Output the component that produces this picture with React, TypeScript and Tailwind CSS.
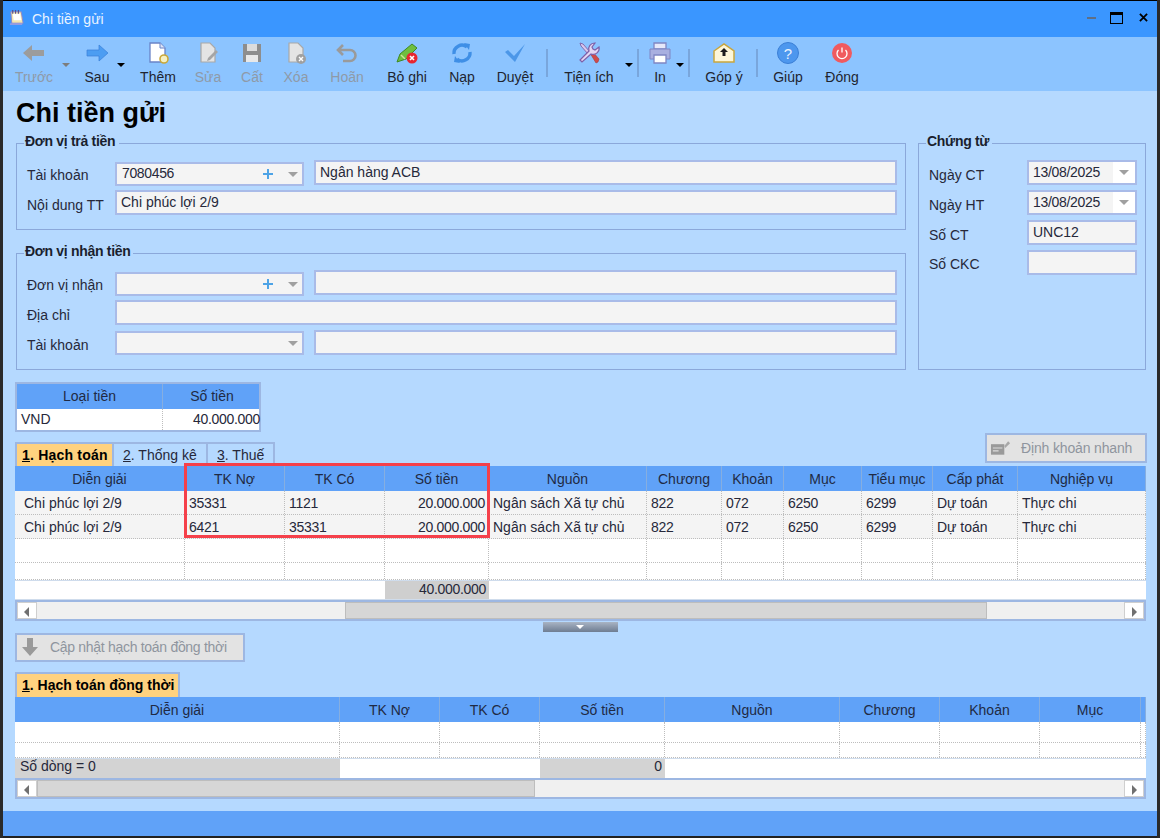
import type { ReactNode } from "react";

const Caret = ({ className = "" }: { className?: string }) => (
  <div className={"absolute w-0 h-0 border-l-[4px] border-r-[4px] border-t-[4px] border-l-transparent border-r-transparent " + className} />
);

const Tool = ({ pos, label, off, icon }: { pos: string; label: string; off?: boolean; icon: ReactNode }) => (
  <div className={"absolute top-[37px] h-[54px] w-[70px] -translate-x-1/2 " + pos}>
    <svg viewBox="0 0 24 24" className="absolute left-[23px] top-[4px] w-[24px] h-[24px]">{icon}</svg>
    <div className={"absolute inset-x-0 top-[31px] text-center text-[14px] leading-[18px] " + (off ? "text-[#8f9aa8]" : "text-[#1f2430]")}>{label}</div>
  </div>
);

const Sep = ({ pos }: { pos: string }) => <div className={"absolute top-[49px] w-[2px] h-[28px] bg-[#79a6dc] " + pos} />;

const Label = ({ pos, children }: { pos: string; children: ReactNode }) => (
  <div className={"absolute text-[14px] leading-[18px] text-[#26283a] " + pos}>{children}</div>
);

const Input = ({ pos, children, white }: { pos: string; children?: ReactNode; white?: boolean }) => (
  <div className={"absolute border-2 border-[#a9bbe8] px-[4px] text-[14px] leading-[20px] text-[#26283a] " + (white ? "bg-white " : "bg-[#f4f4f4] ") + pos}>{children}</div>
);

const Combo = ({ pos, text, plus }: { pos: string; text?: string; plus?: boolean }) => (
  <div className={"absolute h-[24px] w-[189px] border-2 border-[#a9bbe8] bg-[#f4f4f4] text-[14px] leading-[19px] tracking-[-0.35px] text-[#26283a] " + pos}>
    <span className="absolute left-[5px] top-0">{text}</span>
    {plus && <span className="absolute left-[146px] top-[9px] w-[10px] h-[2px] bg-[#4da3e6]" />}
    {plus && <span className="absolute left-[150px] top-[5px] w-[2px] h-[10px] bg-[#4da3e6]" />}
    <Caret className="left-[171px] top-[8px] border-t-[#a0a0a0] border-l-[5px] border-r-[5px] border-t-[5px]" />
  </div>
);

const DateBox = ({ pos, text }: { pos: string; text: string }) => (
  <div className={"absolute left-[1027px] h-[25px] w-[110px] border-2 border-[#a9bbe8] bg-[#f4f4f4] text-[14px] leading-[20px] tracking-[-0.3px] text-[#26283a] " + pos}>
    <span className="absolute left-[4px] top-0">{text}</span>
    <div className="absolute right-0 top-0 bottom-0 w-[22px] bg-white" />
    <Caret className="right-[6px] top-[8px] border-t-[#a0a0a0] border-l-[5px] border-r-[5px] border-t-[5px]" />
  </div>
);

const Group = ({ pos, title, titleW }: { pos: string; title: string; titleW: string }) => (
  <div className={"absolute border border-[#8ba8da] " + pos}>
    <div className={"absolute left-[7px] -top-[12px] h-[20px] bg-[#b5d9ff] pl-[1px] text-[14px] font-bold leading-[18px] tracking-[-0.3px] text-[#1a1f2e] whitespace-nowrap " + titleW}>{title}</div>
  </div>
);

const ScrollBar = ({ pos, thumb }: { pos: string; thumb: string }) => (
  <div className={"absolute left-[15px] w-[1131px] border-2 border-[#9db7e2] bg-[#f0f0f0] " + pos}>
    <div className={"absolute top-0 bottom-0 bg-[#d6d6d6] border border-[#bdbdbd] " + thumb} />
    <div className="absolute left-0 top-0 bottom-0 w-[20px] bg-white border border-[#cfcfcf]">
      <div className="absolute left-[6px] top-[4px] w-0 h-0 border-y-[5px] border-r-[5px] border-y-transparent border-r-[#707070]" />
    </div>
    <div className="absolute right-0 top-0 bottom-0 w-[20px] bg-white border border-[#cfcfcf]">
      <div className="absolute left-[7px] top-[4px] w-0 h-0 border-y-[5px] border-l-[5px] border-y-transparent border-l-[#707070]" />
    </div>
  </div>
);

const mainCols = "grid-cols-[170px_100px_100px_104px_158px_75px_62px_78px_71px_85px_128px]";
const subCols = "grid-cols-[325px_100px_100px_125px_175px_100px_100px_101px_5px]";

const mainHead = ["Diễn giải", "TK Nợ", "TK Có", "Số tiền", "Nguồn", "Chương", "Khoản", "Mục", "Tiểu mục", "Cấp phát", "Nghiệp vụ"];
const subHead = ["Diễn giải", "TK Nợ", "TK Có", "Số tiền", "Nguồn", "Chương", "Khoản", "Mục", ""];

const rows = [
  ["Chi phúc lợi 2/9", "35331", "1121", "20.000.000", "Ngân sách Xã tự chủ", "822", "072", "6250", "6299", "Dự toán", "Thực chi"],
  ["Chi phúc lợi 2/9", "6421", "35331", "20.000.000", "Ngân sách Xã tự chủ", "822", "072", "6250", "6299", "Dự toán", "Thực chi"],
];
const numeric = [1, 2, 3, 5, 6, 7, 8];

const HeadRow = ({ cols, names, pos }: { cols: string; names: string[]; pos: string }) => (
  <div className={"absolute left-[15px] w-[1131px] h-[25px] grid bg-[#60a2f8] " + cols + " " + pos}>
    {names.map((n, i) => (
      <div key={i} className="border-r border-[#86aee0] text-center text-[14px] leading-[26px] text-[#1f2a44] whitespace-nowrap overflow-hidden">{n}</div>
    ))}
  </div>
);

const EmptyRow = ({ cols, count, pos }: { cols: string; count: number; pos: string }) => (
  <div className={"absolute left-[15px] w-[1131px] grid bg-white border-b border-dotted border-[#bdbdbd] " + cols + " " + pos}>
    {Array.from({ length: count }).map((_, i) => (
      <div key={i} className="border-r border-dotted border-[#bdbdbd]" />
    ))}
  </div>
);

export default function App() {
  return (
    <div className="relative w-[1160px] h-[838px] overflow-hidden bg-[#b5d9ff] [font-family:Liberation_Sans,Arial,sans-serif]">
      {/* title bar */}
      <div className="absolute left-0 top-0 w-full h-[37px] bg-[#3a96ff]" />
      <svg viewBox="0 0 18 18" className="absolute left-[8px] top-[9px] w-[17px] h-[17px]">
        <path d="M3 3h11l2 12H4z" fill="#f3e7b0" stroke="#8d86c9" />
        <path d="M5 5h8l1 7H6z" fill="#fff" />
        <path d="M5 1v4M8 1v4M11 1v4" stroke="#5b4f8a" strokeWidth="1.2" />
        <path d="M2 16h13" stroke="#a59ee0" strokeWidth="1.5" />
      </svg>
      <div className="absolute left-[32px] top-[10px] text-[14px] leading-[18px] text-[#e9f3ff]">Chi tiền gửi</div>
      <div className="absolute left-[1087px] top-[17px] w-[9px] h-[2px] bg-[#5f6f85]" />
      <div className="absolute left-[1110px] top-[12px] w-[13px] h-[12px] border border-black border-t-[3px]" />
      <svg viewBox="0 0 10 10" className="absolute left-[1139px] top-[13px] w-[9px] h-[9px]">
        <path d="M1 1l8 8M9 1l-8 8" stroke="#000" strokeWidth="2" />
      </svg>

      {/* toolbar */}
      <div className="absolute left-0 top-[37px] w-full h-[54px] bg-[#8cc4ff]" />
      <Tool pos="left-[34px]" label="Trước" off icon={<path d="M1 12l9-8v5h12v6H10v5z" fill="#9c9c9c" />} />
      <Caret className="left-[62px] top-[63px] border-t-[#7d7d7d]" />
      <Tool pos="left-[97px]" label="Sau" icon={<path d="M23 12l-9-8v5H2v6h12v5z" fill="#4c9df2" stroke="#3a80d8" strokeWidth="0.7" />} />
      <Caret className="left-[117px] top-[63px] border-t-black" />
      <Tool pos="left-[158px]" label="Thêm" icon={<>
        <path d="M4 2h10l5 5v14H4z" fill="#fff" stroke="#6a84c8" strokeWidth="1.3" />
        <path d="M14 2v5h5" fill="#dfe6f7" stroke="#6a84c8" />
        <circle cx="18" cy="18" r="4" fill="#f5f0c4" stroke="#c9a83a" strokeWidth="1.6" />
      </>} />
      <Tool pos="left-[208px]" label="Sửa" off icon={<>
        <path d="M5 2h9l5 5v14H5z" fill="#e4e4e4" stroke="#a8a8a8" strokeWidth="1.2" />
        <path d="M11 20l1-3 8-8 2 2-8 8z" fill="#a5a5a5" />
      </>} />
      <Tool pos="left-[252px]" label="Cất" off icon={<>
        <path d="M3 3h18v18H3z" fill="#8d8d8d" />
        <path d="M7 3h10v7H7z" fill="#dcdcdc" />
        <path d="M6 14h12v7H6z" fill="#e8e8e8" />
      </>} />
      <Tool pos="left-[296px]" label="Xóa" off icon={<>
        <path d="M5 2h9l5 5v14H5z" fill="#e4e4e4" stroke="#a8a8a8" strokeWidth="1.2" />
        <circle cx="17" cy="18" r="5" fill="#a0a0a0" />
        <path d="M15 16l4 4M19 16l-4 4" stroke="#fff" strokeWidth="1.4" />
      </>} />
      <Tool pos="left-[347px]" label="Hoãn" off icon={<path d="M8 4L3 9l5 5M3 9h12a5 5 0 0 1 0 11H8" fill="none" stroke="#9a9a9a" strokeWidth="2.6" />} />
      <Tool pos="left-[407px]" label="Bỏ ghi" icon={<>
        <path d="M2 21l3-8L17 3l5 4-11 11z" fill="#6fbf3f" stroke="#3f8a24" />
        <path d="M6 14l4 4" stroke="#c9e89a" strokeWidth="1.5" />
        <circle cx="17" cy="17" r="5.5" fill="#e8252f" />
        <path d="M15 15l4 4M19 15l-4 4" stroke="#fff" strokeWidth="1.6" />
      </>} />
      <Tool pos="left-[462px]" label="Nạp" icon={<>
        <path d="M4 13a8 8 0 0 1 13-7" fill="none" stroke="#3f8fe6" strokeWidth="3.4" />
        <path d="M20 11a8 8 0 0 1-13 7" fill="none" stroke="#3f8fe6" strokeWidth="3.4" />
        <path d="M14 2l6 1-1 6zM10 22l-6-1 1-6z" fill="#3f8fe6" />
      </>} />
      <Tool pos="left-[515px]" label="Duyệt" icon={<path d="M2 11l3-2 6 6L22 3l-10 18z" fill="#4c97e8" />} />
      <Sep pos="left-[546px]" />
      <Tool pos="left-[589px]" label="Tiện ích" icon={<>
        <path d="M3 2l3 1 7 8-2 2-7-8z" fill="#d9c8ec" stroke="#7d5fa8" strokeWidth="0.9" />
        <path d="M13 12l2-2 7 8-1 3-2 1z" fill="#d04a4a" stroke="#a83a3a" strokeWidth="0.6" />
        <path d="M22 6l-4 3-2-1-1-2 3-4a6 6 0 0 0-6 8L3 19l2 2 9-8a6 6 0 0 0 8-7z" fill="#e3d6f2" stroke="#7d5fa8" strokeWidth="1.2" />
      </>} />
      <Caret className="left-[625px] top-[63px] border-t-black" />
      <Sep pos="left-[637px]" />
      <Tool pos="left-[660px]" label="In" icon={<>
        <path d="M6 2h12v6H6z" fill="#e6e8fa" stroke="#7f86c4" strokeWidth="1.3" />
        <path d="M2 8h20v10H2z" fill="#a9afe0" stroke="#7f86c4" />
        <path d="M6 14h12v8H6z" fill="#fff" stroke="#7f86c4" strokeWidth="1.3" />
      </>} />
      <Caret className="left-[676px] top-[63px] border-t-black" />
      <Sep pos="left-[688px]" />
      <Tool pos="left-[724px]" label="Góp ý" icon={<>
        <path d="M2 10l10-7 10 7v11H2z" fill="#fdf6d8" stroke="#c9a63e" strokeWidth="1.5" />
        <path d="M12 7l4 4h-2.5v4h-3v-4H8z" fill="#1c1c1c" />
      </>} />
      <Sep pos="left-[756px]" />
      <Tool pos="left-[788px]" label="Giúp" icon={<>
        <circle cx="12" cy="12" r="10.5" fill="#4d97ee" stroke="#3b7fd6" />
        <text x="12" y="17.5" textAnchor="middle" fontSize="15" fill="#e8f2ff">?</text>
      </>} />
      <Tool pos="left-[842px]" label="Đóng" icon={<>
        <circle cx="12" cy="12" r="10" fill="#f05a5f" />
        <path d="M8.5 9a5 5 0 1 0 7 0" fill="none" stroke="#fff" strokeWidth="1.3" />
        <path d="M12 6.5v5" stroke="#fff" strokeWidth="1.3" />
      </>} />

      <div className="absolute left-[16px] top-[97px] text-[27px] font-bold leading-[32px] text-black">Chi tiền gửi</div>

      {/* Đơn vị trả tiền */}
      <Group pos="left-[16px] top-[143px] w-[890px] h-[87px]" title="Đơn vị trả tiền" titleW="w-[95px]" />
      <Label pos="left-[27px] top-[166px]">Tài khoản</Label>
      <Combo pos="left-[115px] top-[162px]" text="7080456" plus />
      <Input pos="left-[314px] top-[160px] w-[583px] h-[25px]">Ngân hàng ACB</Input>
      <Label pos="left-[27px] top-[196px]">Nội dung TT</Label>
      <Input pos="left-[115px] top-[190px] w-[782px] h-[25px]">Chi phúc lợi 2/9</Input>

      {/* Đơn vị nhận tiền */}
      <Group pos="left-[16px] top-[253px] w-[890px] h-[117px]" title="Đơn vị nhận tiền" titleW="w-[109px]" />
      <Label pos="left-[27px] top-[276px]">Đơn vị nhận</Label>
      <Combo pos="left-[115px] top-[272px]" plus />
      <Input pos="left-[314px] top-[270px] w-[583px] h-[25px]" />
      <Label pos="left-[27px] top-[306px]">Địa chỉ</Label>
      <Input pos="left-[115px] top-[300px] w-[782px] h-[25px]" />
      <Label pos="left-[27px] top-[336px]">Tài khoản</Label>
      <Combo pos="left-[115px] top-[331px]" />
      <Input pos="left-[314px] top-[330px] w-[583px] h-[25px]" />

      {/* Chứng từ */}
      <Group pos="left-[918px] top-[143px] w-[228px] h-[227px]" title="Chứng từ" titleW="w-[66px]" />
      <Label pos="left-[929px] top-[166px]">Ngày CT</Label>
      <DateBox pos="top-[160px]" text="13/08/2025" />
      <Label pos="left-[929px] top-[196px]">Ngày HT</Label>
      <DateBox pos="top-[190px]" text="13/08/2025" />
      <Label pos="left-[929px] top-[226px]">Số CT</Label>
      <Input pos="left-[1027px] top-[220px] w-[110px] h-[25px]">UNC12</Input>
      <Label pos="left-[929px] top-[255px]">Số CKC</Label>
      <Input pos="left-[1027px] top-[250px] w-[110px] h-[25px]" />

      {/* Loại tiền */}
      <div className="absolute left-[15px] top-[382px] w-[246px] h-[50px] border-2 border-[#9db7e2] bg-white text-[14px] text-[#26283a]">
        <div className="grid grid-cols-[146px_98px] h-[25px] bg-[#60a2f8] text-center leading-[24px] text-[#1f2a44]">
          <div className="border-r border-[#86aee0]">Loại tiền</div>
          <div>Số tiền</div>
        </div>
        <div className="grid grid-cols-[146px_98px] h-[21px] leading-[21px]">
          <div className="border-r border-dotted border-[#bdbdbd] pl-[4px]">VND</div>
          <div className="text-right pr-[1px] tracking-[-0.3px]">40.000.000</div>
        </div>
      </div>

      {/* tabs */}
      <div className="absolute left-[15px] top-[442px] flex h-[25px] text-[14px] leading-[22px] text-[#26283a]">
        <div className="w-[99px] border-2 border-b-0 border-[#9db7e2] bg-[#ffd27f] pl-[5px] font-bold text-black tracking-[0.2px]"><u>1</u>. Hạch toán</div>
        <div className="w-[94px] border-2 border-b-0 border-l-0 border-[#9db7e2] pl-[9px]"><u>2</u>. Thống kê</div>
        <div className="w-[67px] border-2 border-b-0 border-l-0 border-[#9db7e2] pl-[9px]"><u>3</u>. Thuế</div>
      </div>
      <div className="absolute left-[985px] top-[433px] w-[162px] h-[30px] border-2 border-[#9db7e2] bg-[#e3e3e3] text-[14px] leading-[26px] tracking-[-0.15px] text-[#8f959e]">
        <svg viewBox="0 0 22 18" className="absolute left-[3px] top-[4px] w-[21px] h-[18px]">
          <path d="M1 5h14v11H1z" fill="#9a9a9a" />
          <path d="M3 9h10M3 12h6" stroke="#dcdcdc" strokeWidth="1.2" />
          <path d="M15 7l4-5 2 2-5 5z" fill="#a8a8a8" />
        </svg>
        <span className="absolute left-[34px] top-0 whitespace-nowrap">Định khoản nhanh</span>
      </div>

      {/* bảng hạch toán */}
      <div className="absolute left-[15px] top-[466px] w-[1131px] h-[136px] border-2 border-[#9db7e2] box-border" />
      <HeadRow cols={mainCols} names={mainHead} pos="top-[466px]" />
      {rows.map((row, r) => (
        <div key={r} className={"absolute left-[15px] w-[1131px] h-[24px] grid bg-[#f4f4f4] border-b border-dotted border-[#bdbdbd] " + mainCols + " " + (r === 0 ? "top-[491px]" : "top-[515px]")}>
          {row.map((c, i) => (
            <div key={i} className={"border-r border-dotted border-[#bdbdbd] text-[14px] leading-[24px] text-[#26283a] whitespace-nowrap overflow-hidden " + (numeric.includes(i) ? "tracking-[-0.3px] " : "") + (i === 3 ? "text-right pr-[3px]" : i === 0 ? "pl-[9px]" : "pl-[4px]")}>{c}</div>
          ))}
        </div>
      ))}
      <EmptyRow cols={mainCols} count={11} pos="top-[539px] h-[24px]" />
      <EmptyRow cols={mainCols} count={11} pos="top-[563px] h-[17px]" />
      <div className="absolute left-[15px] top-[580px] w-[1131px] h-[20px] grid grid-cols-[370px_104px_657px] bg-white border-y border-[#cfdcec] text-[14px] leading-[17px] text-[#26283a]">
        <div />
        <div className="bg-[#cfcfcf] text-right pr-[3px] tracking-[-0.3px]">40.000.000</div>
        <div />
      </div>
      <ScrollBar pos="top-[600px] h-[21px]" thumb="left-[328px] w-[642px]" />
      <div className="absolute left-[543px] top-[622px] w-[75px] h-[10px] bg-gradient-to-b from-[#a9b4c4] to-[#6e7d92]">
        <Caret className="left-[33px] top-[3px] border-t-white" />
      </div>

      {/* cập nhật */}
      <div className="absolute left-[15px] top-[633px] w-[230px] h-[29px] border-2 border-[#9db7e2] bg-[#e3e3e3] text-[14px] leading-[25px] tracking-[-0.3px] text-[#8f959e]">
        <svg viewBox="0 0 20 20" className="absolute left-[3px] top-[2px] w-[20px] h-[20px]">
          <path d="M7 1h6v9h5l-8 9-8-9h5z" fill="#9a9a9a" />
        </svg>
        <span className="absolute left-[33px] top-0 whitespace-nowrap">Cập nhật hạch toán đồng thời</span>
      </div>

      {/* hạch toán đồng thời */}
      <div className="absolute left-[15px] top-[672px] w-[165px] h-[25px] border-2 border-b-0 border-[#9db7e2] bg-[#ffd27f] pl-[5px] text-[14px] font-bold leading-[22px] text-black whitespace-nowrap"><u>1</u>. Hạch toán đồng thời</div>
      <HeadRow cols={subCols} names={subHead} pos="top-[697px]" />
      <EmptyRow cols={subCols} count={9} pos="top-[722px] h-[21px]" />
      <EmptyRow cols={subCols} count={9} pos="top-[743px] h-[15px]" />
      <div className="absolute left-[15px] top-[758px] w-[1131px] h-[21px] grid grid-cols-[325px_200px_125px_481px] bg-white border-y border-[#cfdcec] text-[14px] leading-[15px] text-[#26283a]">
        <div className="bg-[#d3d3d3] pl-[5px]">Số dòng = 0</div>
        <div />
        <div className="bg-[#d3d3d3] text-right pr-[3px]">0</div>
        <div />
      </div>
      <ScrollBar pos="top-[778px] h-[21px]" thumb="left-[20px] w-[498px]" />

      {/* red highlight */}
      <div className="absolute left-[184px] top-[463px] w-[306px] h-[75px] border-[3px] border-[#f5404a]" />

      {/* bottom bar and window edges */}
      <div className="absolute left-0 top-[811px] w-full h-[25px] bg-[#60a2f8]" />
      <div className="absolute left-0 top-0 w-full h-[1px] bg-black" />
      <div className="absolute left-0 bottom-0 w-full h-[2px] bg-[#222]" />
      <div className="absolute left-0 top-0 bottom-0 w-[3px] bg-[#2a2a2a]" />
      <div className="absolute right-0 top-0 bottom-0 w-[3px] bg-[#2a2a2a]" />
    </div>
  );
}
